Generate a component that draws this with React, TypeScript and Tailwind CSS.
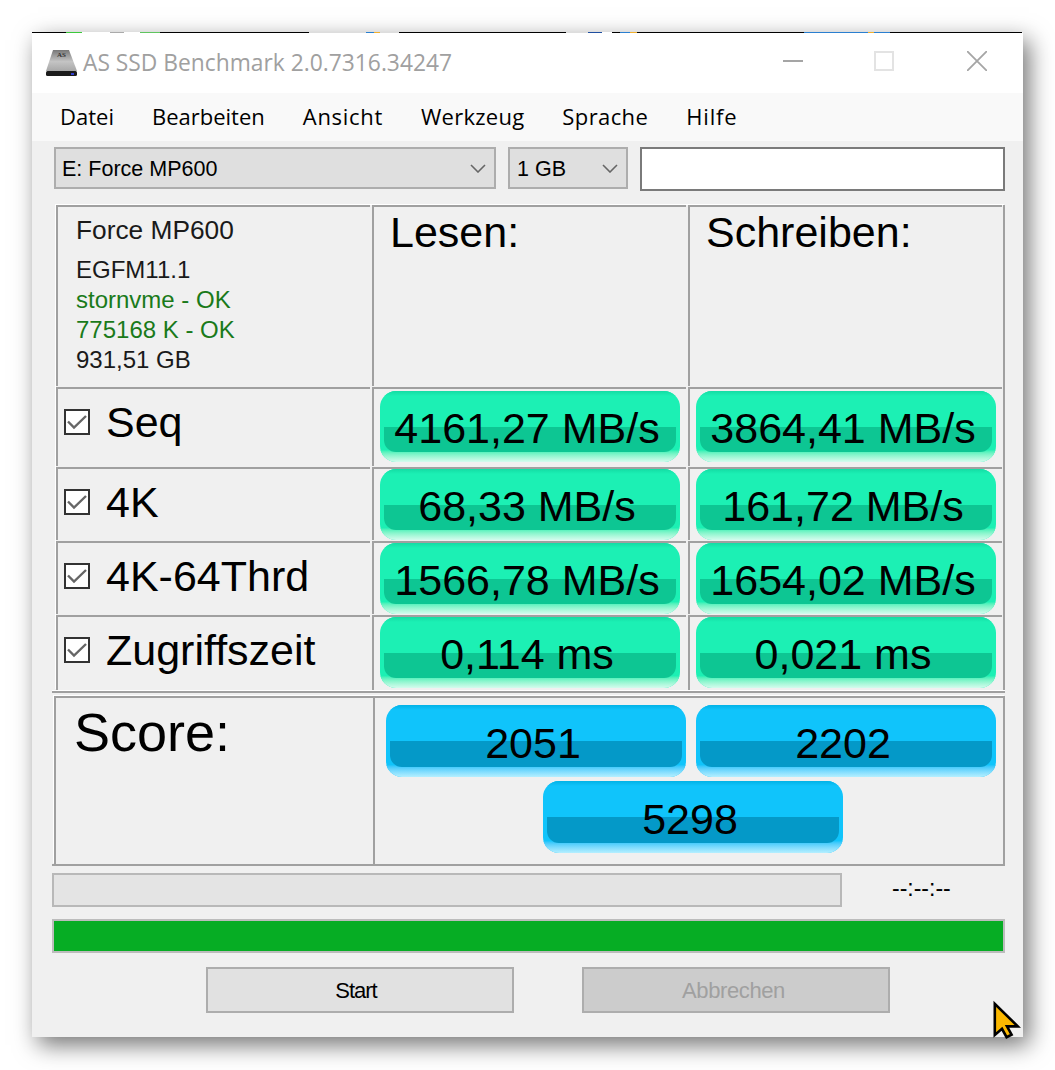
import React from "react";

const SANS = "font-['Liberation_Sans',Arial,sans-serif]";
const UI = "font-['Open_Sans',sans-serif]";

// bits of the desktop that shine through the window's top edge: [width, colour]
const TOP_EDGE: [number, string][] = [
  [34, "#000"], [16, "#3cc83c"], [28, "#fff"], [14, "#aaa"], [16, "#fff"], [20, "#5fc45f"], [149, "#000"],
  [57, "#ddd"], [8, "#2a7fd0"], [6, "#f0b030"], [19, "#ddd"], [167, "#000"], [22, "#ddd"], [14, "#1f4fa0"],
  [10, "#fff"], [8, "#000"], [10, "#2a7fd0"], [7, "#f0b030"], [167, "#000"], [64, "#2a7fd0"], [6, "#f0b030"],
  [16, "#2a7fd0"], [132, "#000"],
];

const MENU = [
  { label: "Datei", cls: "" },
  { label: "Bearbeiten", cls: "" },
  { label: "Ansicht", cls: "tracking-[0.7px]" },
  { label: "Werkzeug", cls: "tracking-[0.25px]" },
  { label: "Sprache", cls: "tracking-[0.4px]" },
  { label: "Hilfe", cls: "tracking-[0.8px]" },
];

function Pill({ text, tone, className = "" }: { text: string; tone: "green" | "blue"; className?: string }) {
  const green = tone === "green";
  return (
    <div
      className={`relative w-[300px] shrink-0 overflow-hidden rounded-[16px] ${
        green ? "h-[71px] bg-[#1cf0b4]" : "h-[72px] bg-[#10c4fb]"
      } ${className}`}
    >
      <div
        className={`absolute inset-x-0 top-0 h-[5px] bg-linear-to-b ${
          green ? "from-[#14dca4] to-[#1cf0b4]" : "from-[#02b2e6] to-[#10c4fb]"
        }`}
      />
      <div
        className={`absolute inset-x-0 bottom-0 h-[12px] bg-linear-to-b ${
          green ? "from-[#1cf0b4] to-[#d4fbee]" : "from-[#10c4fb] to-[#b4efff]"
        }`}
      />
      <div
        className={`absolute inset-x-[4px] top-[36px] bottom-[10px] rounded-b-[12px] ${
          green ? "bg-[#0dc693]" : "bg-[#0499c8]"
        }`}
      />
      <div className={`absolute inset-0 flex items-center justify-center pr-[6px] pt-[4px] text-[43px] leading-none text-black ${SANS}`}>
        {text}
      </div>
    </div>
  );
}

function Check() {
  return (
    <span className="mt-[20px] flex h-[26px] w-[26px] shrink-0 items-center justify-center border-2 border-[#333] bg-white">
      <svg width="22" height="22" viewBox="0 0 22 22" fill="none">
        <path d="M2 10.5l6 6L20 5" stroke="#666" strokeWidth="2.4" />
      </svg>
    </span>
  );
}

function Row({ label, read, write, h, top }: { label: string; read: string; write: string; h: string; top: string }) {
  return (
    <div className={`flex gap-[2px] ${h}`}>
      <div className="flex w-[314px] items-start gap-[16px] border-t-2 border-l-2 border-[#a0a0a0] pl-[6px]">
        <Check />
        <span className={`mt-[9px] text-[43px] leading-[48px] text-black ${SANS}`}>{label}</span>
      </div>
      <div className={`w-[314px] border-t-2 border-l-2 border-[#a0a0a0] pl-[6px] ${top}`}>
        <Pill text={read} tone="green" />
      </div>
      <div className={`w-[314px] border-t-2 border-l-2 border-[#a0a0a0] pl-[6px] ${top}`}>
        <Pill text={write} tone="green" />
      </div>
    </div>
  );
}

function Chevron() {
  return (
    <svg width="16" height="9" viewBox="0 0 16 9" fill="none">
      <path d="M1 1l7 7 7-7" stroke="#666" strokeWidth="1.6" />
    </svg>
  );
}

function Cursor() {
  return (
    <svg className="absolute left-[960px] top-[968px]" width="30" height="40" viewBox="0 0 30 40">
      <path
        d="M2.8 3.8V35l7.2-6.2 4.6 8.4 5-2.6-4.6-8.2H25.8z"
        fill="#fbb800"
        stroke="#000"
        strokeWidth="2.6"
      />
    </svg>
  );
}

export default function App() {
  return (
    <div className={`h-[1070px] w-[1055px] overflow-hidden bg-white pl-[32px] pt-[32px] ${SANS}`}>
      <div className="relative h-[1005px] w-[991px] bg-[#f0f0f0] shadow-[6px_8px_22px_rgba(0,0,0,0.55)]">
        <div className="flex h-[1px]">
          {TOP_EDGE.map(([w, c], i) => (
            <div key={i} style={{ width: w, background: c }} />
          ))}
        </div>
        {/* title bar */}
        <div className="flex h-[60px] items-center bg-white pl-[14px]">
          <svg width="31" height="26" viewBox="0 0 31 26">
            <defs>
              <linearGradient id="ssd" x1="0" y1="0" x2="0" y2="1">
                <stop offset="0" stopColor="#777" />
                <stop offset="0.55" stopColor="#c4c4c4" />
                <stop offset="1" stopColor="#a8a8a8" />
              </linearGradient>
            </defs>
            <path d="M7 0h16l8 21H0z" fill="url(#ssd)" />
            <text x="15.5" y="7" fontSize="7" textAnchor="middle" fontWeight="700" fill="#333" fontFamily="Liberation Serif">
              AS
            </text>
            <rect x="0" y="21" width="31" height="5" rx="1.5" fill="#1c1c1c" />
            <rect x="25" y="23" width="3" height="2" fill="#3340d0" />
          </svg>
          <span className={`ml-[6px] text-[22.8px] leading-none text-[#a0a0a0] ${UI}`}>
            AS SSD Benchmark 2.0.7316.34247
          </span>
          <div className="ml-auto -mt-[4px] flex items-center pr-[36px]">
            <div className="h-[2px] w-[20px] bg-[#a5a5a5]" />
            <div className="ml-[71px] h-[20px] w-[20px] border-2 border-[#e3e3e3]" />
            <svg className="ml-[73px]" width="20" height="20" viewBox="0 0 20 20" stroke="#a5a5a5" strokeWidth="1.8">
              <path d="M0 0l20 20M20 0L0 20" />
            </svg>
          </div>
        </div>
        {/* menu */}
        <div className={`flex h-[48px] items-center gap-[38px] bg-[#f9f9f9] pb-[2px] pl-[28px] text-[22px] leading-none text-black ${UI}`}>
          {MENU.map((m) => (
            <span key={m.label} className={m.cls}>
              {m.label}
            </span>
          ))}
        </div>

        <div className="pl-[20px]">
          {/* selectors */}
          <div className="flex pt-[6px] text-[21.5px] leading-none text-black">
            <div className="ml-[2px] flex h-[42px] w-[442px] items-center justify-between border-2 border-[#adadad] bg-[#dfdfdf] pl-[6px] pr-[8px]">
              <span className="pt-[3px]">E: Force MP600</span>
              <Chevron />
            </div>
            <div className="ml-[12px] flex h-[42px] w-[120px] items-center justify-between border-2 border-[#adadad] bg-[#dfdfdf] pl-[7px] pr-[8px]">
              <span className="pt-[3px]">1 GB</span>
              <Chevron />
            </div>
            <div className="ml-[12px] h-[44px] w-[365px] border-2 border-[#7a7a7a] bg-white" />
          </div>

          {/* results table */}
          <div className="ml-[4px] mt-[14px] flex w-[949px] flex-col gap-[1px] border-r-2 border-[#a0a0a0] pr-[1px] shadow-[-1px_-1px_0_#fff]">
            <div className="flex h-[181px] gap-[2px]">
              <div className="w-[314px] border-t-2 border-l-2 border-[#a0a0a0] pl-[18px] pt-[8px] text-[24px] leading-[30px] text-[#1a1a1a]">
                <div className="mb-[10px] text-[26.3px]">Force MP600</div>
                <div>EGFM11.1</div>
                <div className="text-[#1a7a1a]">stornvme - OK</div>
                <div className="text-[#1a7a1a]">775168 K - OK</div>
                <div>931,51 GB</div>
              </div>
              <div className="w-[314px] border-t-2 border-l-2 border-[#a0a0a0] pl-[16px] pt-[1px] text-[43px] leading-[48px] text-black">Lesen:</div>
              <div className="w-[314px] border-t-2 border-l-2 border-[#a0a0a0] pl-[16px] pt-[1px] text-[43px] leading-[48px] text-black">Schreiben:</div>
            </div>
            <Row label="Seq" read="4161,27 MB/s" write="3864,41 MB/s" h="h-[79px]" top="pt-[2px]" />
            <Row label="4K" read="68,33 MB/s" write="161,72 MB/s" h="h-[73px]" top="" />
            <Row label="4K-64Thrd" read="1566,78 MB/s" write="1654,02 MB/s" h="h-[73px]" top="" />
            <Row label="Zugriffszeit" read="0,114 ms" write="0,021 ms" h="h-[75px]" top="" />
          </div>
          <div className="h-[3px] w-[953px] border-t border-[#fff] bg-[#a0a0a0]" />

          {/* score */}
          <div className="mt-[3px] h-[170px] w-[953px] border-b-2 border-[#a0a0a0]">
            <div className="ml-[2px] flex h-[168px] w-[951px] border-t-2 border-l-2 border-r-2 border-[#a0a0a0] shadow-[-1px_-1px_0_#fff]">
              <div className="w-[317px] pl-[18px] pt-[4px] text-[54px] leading-[60px] text-black">Score:</div>
              <div className="flex-1 border-l-2 border-[#a0a0a0] pl-[11px] pt-[7px]">
                <div className="flex gap-[10px]">
                  <Pill text="2051" tone="blue" />
                  <Pill text="2202" tone="blue" />
                </div>
                <Pill text="5298" tone="blue" className="ml-[157px] mt-[4px]" />
              </div>
            </div>
          </div>

          {/* progress */}
          <div className="mt-[7px] flex items-center">
            <div className="h-[34px] w-[790px] border-2 border-[#b8b8b8] bg-[#e4e4e4]" />
            <span className="ml-[50px] -mt-[4px] text-[23px] leading-none text-black">--:--:--</span>
          </div>
          <div className="mt-[12px] h-[34px] w-[953px] border-2 border-[#bcbcbc] bg-[#06ad24]" />

          {/* buttons */}
          <div className="mt-[14px] flex">
            <div className="ml-[154px] flex h-[46px] w-[308px] items-center justify-center border-2 border-[#adadad] bg-[#e1e1e1] pr-[8px] text-[22px] tracking-[-1px] text-black">
              Start
            </div>
            <div className="ml-[68px] flex h-[46px] w-[308px] items-center justify-center border-2 border-[#adadad] bg-[#cccccc] pr-[5px] text-[22px] tracking-[-0.4px] text-[#a0a0a0]">
              Abbrechen
            </div>
          </div>
        </div>
        <Cursor />
      </div>
    </div>
  );
}
